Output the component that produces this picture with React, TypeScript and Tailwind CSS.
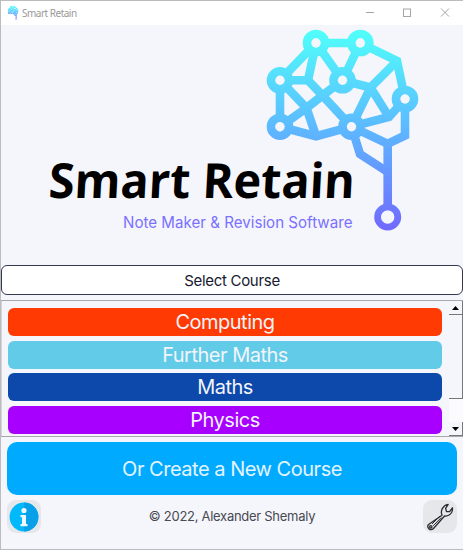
import React from "react";

const nodes: [number, number][] = [
  [316, 43], [360.3, 43], [280, 80.3], [342.5, 80.3], [405, 99], [280, 126.7], [351.5, 126.7],
];

function Brain({ weight = 8.6 }: { weight?: number }) {
  return (
    <g mask="url(#holes)" stroke="url(#brain)" fill="none" strokeWidth={weight} strokeLinejoin="miter">
      <path d="M360.3 43.01L316 43L280 80.3V126.7L316 136.2L351.5 126.7L389 117L405 99L397 61L360.3 43" />
      <path d="M316 43L308 80.3H280L306.5 108L316 136" />
      <path d="M316 43L342.5 80.3L360.3 43" />
      <path d="M308 80.3L322.5 95.5L351.5 126.7" />
      <path d="M280 126.7L306.5 108L322.5 95.5L342.5 80.3L370.5 87.5L389 117" />
      <path d="M397 61L370.5 87.5L351.5 126.7L360 154L387.7 172" />
      <path d="M351.5 126.7L387.7 143.8L405 135.5V99" />
      <path d="M387.7 143V210" />
      {nodes.map(([x, y]) => <circle key={`${x}-${y}`} cx={x} cy={y} r="9" />)}
      <circle cx="387.7" cy="217" r="10" strokeWidth="7" />
    </g>
  );
}

function Defs() {
  return (
    <defs>
      <linearGradient id="brain" gradientUnits="userSpaceOnUse" x1="0" y1="30" x2="0" y2="230">
        <stop offset="0" stopColor="#50fffa" />
        <stop offset="0.47" stopColor="#5cbcff" />
        <stop offset="1" stopColor="#7169ff" />
      </linearGradient>
      <mask id="holes" maskUnits="userSpaceOnUse" x="250" y="20" width="180" height="220">
        <rect x="250" y="20" width="180" height="220" fill="white" />
        {nodes.map(([x, y]) => <circle key={`${x}-${y}`} cx={x} cy={y} r="4.7" fill="black" />)}
        <circle cx="387.7" cy="217" r="6.6" fill="black" />
      </mask>
    </defs>
  );
}

function Course({ name, color }: { name: string; color: string }) {
  return (
    <button className={`flex h-[28px] w-[434px] shrink-0 items-center justify-center rounded-[6px] text-[20px] leading-none tracking-[-0.5px] text-[#f2f4fa] ${color}`}>
      {name}
    </button>
  );
}

export default function App() {
  return (
    <div className="flex h-[550px] w-[463px] flex-col overflow-hidden border-t border-l border-b border-[#bcbcbe] bg-[#f5f6fb] font-['Inter','Liberation_Sans',sans-serif]">
      <header className="flex h-[24px] shrink-0 items-center bg-white pl-[6px]">
        <svg width="12" height="14" viewBox="262 27 158 206"><Brain weight={15} /></svg>
        <span className="ml-[3px] font-['Noto_Sans',sans-serif] text-[10px] leading-none tracking-[-0.5px] text-[#999]">Smart Retain</span>
        <svg className="ml-auto" width="100" height="24" viewBox="363 1 100 24" fill="none" stroke="#a5a5a5" strokeWidth="1">
          <path d="M366 12.5h8M441 8.5l8 8m0-8l-8 8" />
          <rect x="403.5" y="9" width="7" height="7.5" />
        </svg>
      </header>

      <svg className="shrink-0" width="462" height="240" viewBox="1 25 462 240">
        <Defs />
        <Brain />
        <g transform="translate(48 198) skewX(-3)">
          <text x="0" y="0" textLength="306" lengthAdjust="spacingAndGlyphs" fontFamily="'Open Sans',sans-serif" fontWeight="700" fontSize="48.5">Smart Retain</text>
        </g>
        <text x="123" y="228" textLength="229.5" lengthAdjust="spacingAndGlyphs" fontFamily="Inter,sans-serif" fontSize="15.5" fill="#7b70ff">Note Maker &amp; Revision Software</text>
      </svg>

      <button className="flex h-[30px] w-[462px] shrink-0 items-center justify-center rounded-[6px] border border-[#343a52] bg-white text-[15px] leading-none tracking-[-0.3px] text-[#17192f]">
        Select Course
      </button>

      <main className="mt-[5px] flex h-[137px] shrink-0 border-y border-[#a8a8ac]">
        <div className="flex flex-1 flex-col gap-[4.6px] border-l border-[#d5d5d9] pt-[7px] pl-[6px]">
          <Course name="Computing" color="bg-[#ff3a03]" />
          <Course name="Further Maths" color="bg-[#62cce8]" />
          <Course name="Maths" color="bg-[#0c49ab]" />
          <Course name="Physics" color="bg-[#a800ff]" />
        </div>
        <div className="flex w-[14px] flex-col bg-[#fbfbfd]">
          <div className="flex h-[14px] items-center justify-center border-r border-b border-[#77777a] bg-[#f5f6fb]">
            <svg width="7" height="4"><path d="M3.5 0L7 4H0Z" /></svg>
          </div>
          <div className="h-[84px] border-r border-b border-[#77777a] bg-[#f5f6fb]" />
          <div className="flex-1" />
          <div className="flex h-[14px] items-center justify-center border-r border-b border-[#77777a] bg-[#f5f6fb]">
            <svg width="7" height="4"><path d="M3.5 4L7 0H0Z" /></svg>
          </div>
        </div>
      </main>

      <button className="mt-[5px] ml-[6px] flex h-[53px] w-[450px] shrink-0 items-center justify-center rounded-[10px] bg-[#00aaff] text-[20px] leading-none tracking-[-0.48px] text-[#e4f4ff]">
        Or Create a New Course
      </button>

      <footer className="mt-[5px] flex h-[33px] shrink-0 items-center justify-between pr-[6px] pl-[6px]">
        <button className="flex h-[33px] w-[34px] items-center justify-center rounded-[9px] bg-[#e6e7eb]">
          <svg width="30" height="30" viewBox="0 0 30 30">
            <circle cx="15" cy="15" r="14.4" fill="#00b9fb" />
            <path d="M15 .6a14.4 14.4 0 0 1 0 28.8Z" fill="#08a0e9" />
            <circle cx="15" cy="8.5" r="2.6" fill="#eefaff" />
            <path d="M11.5 13H17V22H18.5V24.3H11.5V22H13V15.2H11.5Z" fill="#eefaff" />
          </svg>
        </button>
        <span className="text-[13px] leading-none tracking-[-0.28px] text-[#484951]">© 2022, Alexander Shemaly</span>
        <button className="flex h-[33px] w-[34px] items-center justify-center rounded-[9px] bg-[#e6e7eb]">
          <svg width="28" height="28" viewBox="0 0 28 28" fill="none" stroke="#2c2c2e" strokeWidth="1.3" strokeLinejoin="round">
            <path d="M16 12.2C14.2 8 16.5 2.5 22.2 1.4L19.6 5.4L20.5 8.5L23.6 8.6L26.4 4.8C27.2 10 22.8 13.8 18.5 13L7.5 25.5C5 28.3-.2 25 2.5 21.5Z" />
            <path d="M15.2 14.6L7.2 22.8M14 13L6 21" strokeWidth="1" />
            <circle cx="4.8" cy="23.8" r="1.2" />
          </svg>
        </button>
      </footer>
    </div>
  );
}
